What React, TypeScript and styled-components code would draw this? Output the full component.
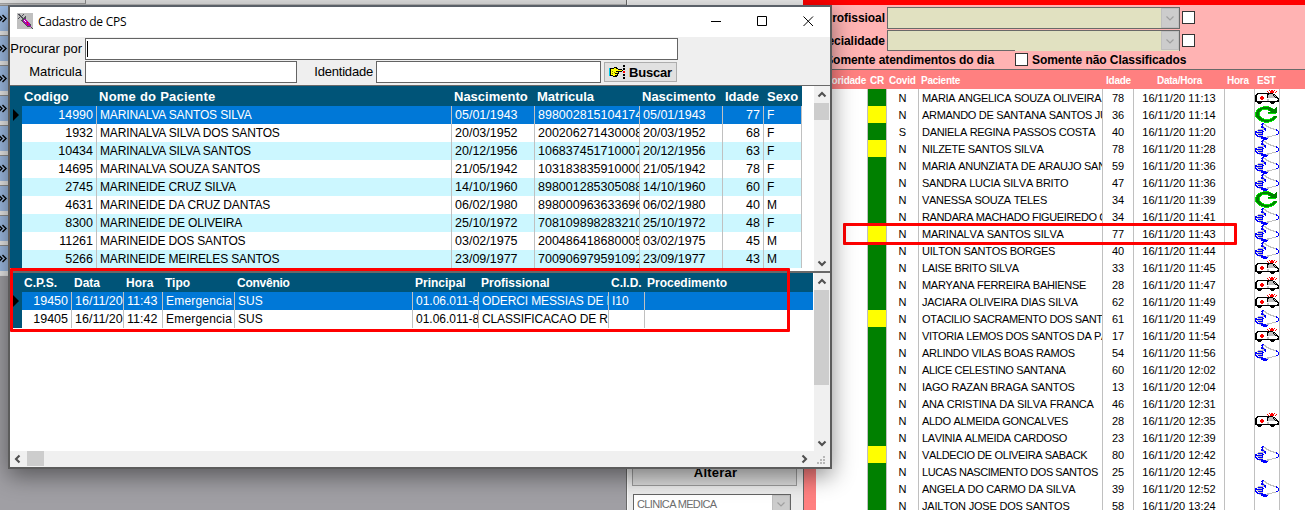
import React from 'react';
import styled, { createGlobalStyle } from 'styled-components';

const GlobalStyle = createGlobalStyle`
  * { box-sizing: border-box; }
  body { margin: 0; overflow: hidden; font-family: "Liberation Sans", Arial, sans-serif; }
`;

/* ---------- pixel icons ---------- */

const INK: Record<string, string> = {
  k: '#000', w: '#fff', g: '#c0c0c0', r: '#f00', b: '#00f', n: '#008000', l: '#00e800', y: '#ff0',
  m: '#b000b0', d: '#505058', c: '#00c8e8', o: '#808000',
};

const AMBULANCE = [
  '..............r.rr.r....',
  '............r..rrrr..r..',
  '.............r.rrrr.r...',
  '..kkkkkkkkkkkkkkkk......',
  '.kkwwwwwwwwwkkggggkk....',
  'kkwwwwwwwwwwkgggggkgk...',
  'kkwwwwrrwwwwkggggggkgk..',
  'kkwwwrrrrwwwkgggggggkkk.',
  'kkwwwrrrrwwwwwwwwwwwwwkk',
  'kkwwwwrrwwwwggwwwwwwwwwk',
  'kkwwwwwwwwwwggwwwwwwwwkk',
  'kkkkkkkkkkkkkkkkkkkkkkkk',
  '..kkkkk........kkkkk....',
  '...kkk..........kkk.....',
];
const HAND = [
  '.......bb...............',
  '......bbggg.............',
  '.......b..gg............',
  '......bbg..ggg..........',
  '......bbbg...ggg........',
  '.......ggbb....gggg.....',
  '...ggggggbb.......gggb..',
  '..gbbbbb..b..........bb.',
  'bb.ggggbb..............b',
  'bbbbbbbb...............b',
  'b.gggggb...............b',
  'bb.bbbbb.............bb.',
  '.bb.gggg.........gggg...',
  '..bbbbbb....ggggg.......',
  '....ggbbbbbggg..........',
  '......bbbbbbb...........',
  '........bbbb............',
];
const REFRESH = [
  '........llllll..........',
  '.....llnnnnnnnnl.....n..',
  '...llnnnnnnnnnnnnl..nn..',
  '..lnnnnllllllnnnnnnnnn..',
  '.lnnnnl......lnnnnnnnn..',
  '.lnnnl.........lnnnnnn..',
  'lnnnl........nnnnnnnnn..',
  'lnnnl........llllllll...',
  'lnnnl...................',
  'lnnnl...................',
  'lnnnnl............lnnn..',
  '.lnnnnl..........lnnnl..',
  '..lnnnnll......llnnnl...',
  '...lnnnnnllllllnnnnl....',
  '....llnnnnnnnnnnnll.....',
  '......lllnnnnnlll.......',
  '.........lllll..........',
];
const POINTER = [
  '..............kk',
  '..............kk',
  '.....kkk........',
  'ckkkkyykk.....kk',
  'ckyyyyyyykkkk.kk',
  'ckyyyyyyyyyyyk..',
  'ckyoyyykkkkkk.rr',
  'ckyyyoyyyk....rr',
  'ckyoyykkkk......',
  'ckyyyyyyk.....kk',
  'ckkkyykkk.....kk',
  '....kkkk........',
  '..............kk',
  '..............kk',
];
const SYRINGE = [
  'gggggggggggggggg',
  'gddgggdggggggggg',
  'ggddgdgggggggggg',
  'gggddgggdggggggg',
  'ggdgddgddggggggg',
  'gdgggddddggggggg',
  'gggggddmmggggggg',
  'ggggddmwmmgggggg',
  'gggggdmmwmmggggg',
  'ggggggdmmmrmgggg',
  'gggggggdmmmmmggg',
  'ggggggggdmrmmdgg',
  'gggggggggdmmmdgg',
  'ggggggggggdddmgg',
  'ggggggggggggggdg',
  'gggggggggggggggd',
];

const Pixels = styled.svg`
  display: block;
  flex: none;
`;

function PixelIcon({ map }: { map: string[] }) {
  const w = map[0].length;
  const paths: Record<string, string> = {};
  map.forEach((line, y) => {
    for (let x = 0; x < line.length; x++) {
      const ch = line[x];
      if (ch !== '.') paths[ch] = (paths[ch] || '') + `M${x} ${y}h1v1h-1z`;
    }
  });
  return (
    <Pixels width={w} height={map.length} viewBox={`0 0 ${w} ${map.length}`} shapeRendering="crispEdges">
      {Object.entries(paths).map(([ch, d]) => <path key={ch} d={d} fill={INK[ch]} />)}
    </Pixels>
  );
}

function Arrow({ dir, color = '#505050', thin }: { dir: 'up' | 'down' | 'left' | 'right'; color?: string; thin?: boolean }) {
  const d = { up: 'M1.5 6.5L5 3l3.5 3.5', down: 'M1.5 3.5L5 7l3.5-3.5', left: 'M6.5 1.5L3 5l3.5 3.5', right: 'M3.5 1.5L7 5L3.5 8.5' }[dir];
  return <svg width="10" height="10" viewBox="0 0 10 10"><path d={d} fill="none" stroke={color} strokeWidth={thin ? 1.2 : 2.1} /></svg>;
}

/* ---------- application behind the window ---------- */

const Desktop = styled.div`
  position: relative;
  display: flex;
  width: 1305px;
  height: 510px;
  overflow: hidden;
  background: #fff;
`;
const LeftArea = styled.div`
  width: 627px;
  display: flex;
  flex-direction: column;
  background: #a09fa4;
  border-right: 1px solid #696969;
`;
const TopStrip = styled.div`
  height: 5px;
  display: flex;
  background: #e1e1e1;
  border-bottom: 1px solid #b8b8b8;
`;
const TopTab = styled.div`
  width: 86px;
  height: 4px;
  border-right: 1px solid #8c8c8c;
  border-bottom: 1px solid #a0a0a0;
`;
const ToolStrip = styled.div`
  height: 271px;
  width: 9px;
  background: #e3e3e3;
  overflow: hidden;
`;
const ToolButton = styled.div`
  height: 30px;
  border-top: 1px solid #8d8d8d;
  border-bottom: 4px solid #e9e9e9;
  background: #9dbbe3;
  display: flex;
  align-items: center;
`;
const MiddleArea = styled.div`
  width: 176px;
  padding: 0 5px 0 4px;
  display: flex;
  flex-direction: column;
  justify-content: flex-end;
  background: #ececec;
  border-left: 1px solid #f8f8f8;
`;
const ChangeButton = styled.div`
  height: 40px;
  margin-right: 1px;
  display: flex;
  align-items: flex-end;
  justify-content: center;
  padding: 0 0 5px 2px;
  background: #dcdcdc;
  border: 1px solid #9c9c9c;
  font: bold 13px "Liberation Sans", sans-serif;
  letter-spacing: 0.2px;
`;
const ClinicSelect = styled.div`
  display: flex;
  width: 158px;
  height: 20px;
  margin: 8px 0 -4px 1px;
  border: 1px solid #646464;
  background: #fff;
  color: #6d6d6d;
  font-size: 11px;
  letter-spacing: -0.65px;
  line-height: 18px;
  padding-left: 3px;
`;
const DropButton = styled.div`
  width: 18px;
  margin-left: auto;
  display: flex;
  align-items: center;
  justify-content: center;
  background: #ccc;
  border: 1px solid #bfbfbf;
`;

const RightArea = styled.div`
  width: 502px;
  display: flex;
  flex-direction: column;
  background: #fff;
`;
const Filters = styled.div`
  height: 70px;
  flex: none;
  border-top: 5px solid #f00;
  border-bottom: 1px solid #696969;
  background: #ffb3b3;
  font: bold 12px "Liberation Sans", sans-serif;
`;
const FilterRow = styled.div<{ $h: number; $top?: number }>`
  display: flex;
  height: ${p => p.$h}px;
  padding-top: ${p => p.$top || 0}px;
`;
const FilterLabel = styled.div`
  width: 84px;
  padding-right: 2px;
  text-align: right;
  line-height: 22px;
  letter-spacing: -0.05px;
`;
const FilterSelect = styled.div<{ $h: number; $cut?: boolean }>`
  display: flex;
  width: 293px;
  height: ${p => p.$h}px;
  border: 1px solid #696969;
  border-bottom-width: ${p => (p.$cut ? 0 : 1)}px;
  padding-bottom: ${p => (p.$cut ? 1 : 0)}px;
  background: linear-gradient(#696969, #696969) left bottom / ${p => (p.$cut ? '127px 1px' : '0 0')} no-repeat #e1e1c1;
`;
const Check = styled.div`
  width: 13px;
  height: 13px;
  border: 1px solid #333;
  background: #fff;
  flex: none;
`;
const ComboCheck = styled(Check)`
  margin: 4px 0 0 2px;
`;
const OnlyRow = styled.div`
  display: flex;
  align-items: center;
  height: 19px;
  margin-top: -1px;
  letter-spacing: -0.07px;
`;
const OnlyToday = styled.span`
  width: 212px;
  padding-right: 21px;
  text-align: right;
  white-space: nowrap;
`;
const OnlyUnrated = styled.span`
  padding-left: 4px;
  white-space: nowrap;
`;
const QueueLine = styled.div`
  display: grid;
  grid-template-columns: 13px 52px 19px 32px 184px 31px 91px 30px 25px 25px;
  height: 17px;
  flex: none;
  font-size: 11px;
  line-height: 18px;
  white-space: nowrap;
  font-kerning: none;
`;
const QueueHead = styled(QueueLine)`
  height: 19px;
  background: #ff8080;
  color: #fff;
  font-weight: bold;
  font-size: 10px;
  line-height: 21px;
  letter-spacing: -0.25px;
`;
const QueueTitle = styled.div<{ $align?: string; $pad?: number }>`
  padding: 0 2px;
  padding-left: ${p => p.$pad ?? 2}px;
  text-align: ${p => p.$align || 'left'};
`;
const QueueCell = styled.div<{ $align?: string; $bg?: string; $ls?: number; $pad?: number }>`
  border-right: 1px solid #c0c0c0;
  overflow: hidden;
  text-align: ${p => p.$align || 'left'};
  background: ${p => p.$bg || 'transparent'};
  letter-spacing: ${p => p.$ls || 0}px;
  padding-left: ${p => p.$pad || 0}px;
`;
const QueueGutter = styled.div`
  background: #ff8080;
  border-left: 1px solid #696969;
`;
const StatusSlot = styled.div<{ $down: boolean }>`
  padding-top: ${p => (p.$down ? 1 : 0)}px;
`;

/* ---------- window ---------- */

const Window = styled.div`
  position: absolute;
  left: 8px;
  top: 5px;
  width: 824px;
  height: 464px;
  display: flex;
  flex-direction: column;
  background: #fff;
  border: 2px solid #5c5c5c;
  border-top-color: #5a6068;
  box-shadow: 0 7px 22px rgba(0, 0, 0, 0.45);
`;
const TitleBar = styled.div`
  height: 30px;
  flex: none;
  display: flex;
  align-items: center;
  padding: 0 16px 2px 7px;
  font: 12px "Open Sans", "Noto Sans", sans-serif;
  letter-spacing: -0.25px;
  svg + span { margin-left: 5px; }
`;
const WindowButtons = styled.div`
  display: flex;
  gap: 35px;
  margin-left: auto;
`;
const SearchArea = styled.div`
  height: 49px;
  flex: none;
  background: #efefef;
  border-bottom: 1px solid #696969;
  padding-top: 1px;
  font-size: 13px;
`;
const SearchRow = styled.div`
  display: flex;
  align-items: center;
  height: 22px;
  margin-bottom: 1px;
`;
const Label = styled.div<{ $w: number; $ls?: number }>`
  width: ${p => p.$w}px;
  text-align: right;
  padding-right: 3px;
  padding-bottom: 2px;
  white-space: nowrap;
  letter-spacing: ${p => p.$ls || 0}px;
`;
const Field = styled.div<{ $w: number }>`
  width: ${p => p.$w}px;
  height: 22px;
  background: #fff;
  border: 1px solid #646464;
  padding: 2px 1px;
`;
const Caret = styled.div`
  width: 1px;
  height: 16px;
  background: #000;
`;
const SearchButton = styled.div`
  width: 73px;
  height: 20px;
  margin-left: 3px;
  padding-left: 4px;
  display: flex;
  align-items: center;
  gap: 4px;
  background: #e1e1e1;
  border: 1px solid #adadad;
  font: bold 13px "Liberation Sans", sans-serif;
  letter-spacing: -0.2px;
`;
const Pane = styled.div<{ $h: number; $line?: boolean }>`
  display: flex;
  height: ${p => p.$h}px;
  flex: none;
  border-top: ${p => (p.$line ? 2 : 0)}px solid #696969;
`;
const Table = styled.div`
  width: 804px;
  font-size: 12px;
`;
const Line = styled.div<{ $cols: string; $w: number; $h: number; $bg: string; $fg?: string }>`
  display: grid;
  grid-template-columns: ${p => p.$cols};
  width: ${p => p.$w}px;
  height: ${p => p.$h}px;
  line-height: ${p => p.$h + 1}px;
  background: ${p => p.$bg};
  color: ${p => p.$fg || '#000'};
  white-space: nowrap;
`;
const Margin = styled.div`
  background: #005478;
  display: flex;
  align-items: center;
  padding-left: 3px;
`;
const RowMark = styled.div`
  border: 6px solid transparent;
  border-left-color: #000;
  border-right: 0;
`;
const Cell = styled.div<{ $right?: boolean; $ls?: number; $size?: number; $last?: boolean }>`
  overflow: hidden;
  padding: 0 3px;
  border-right: ${p => (p.$last ? 0 : 1)}px solid #c0c0c0;
  text-align: ${p => (p.$right ? 'right' : 'left')};
  letter-spacing: ${p => p.$ls || 0}px;
  font-size: ${p => p.$size || 12}px;
`;
const HeadCell = styled.div<{ $size: number; $ls?: number; $pad?: number }>`
  padding-left: ${p => p.$pad ?? 2}px;
  font-weight: bold;
  font-size: ${p => p.$size}px;
  letter-spacing: ${p => p.$ls || 0}px;
`;
const VScroll = styled.div`
  width: 16px;
  background: #f0f0f0;
  display: flex;
  flex-direction: column;
  align-items: center;
`;
const ScrollEnd = styled.div`
  width: 16px;
  height: 17px;
  display: flex;
  align-items: center;
  justify-content: center;
  flex: none;
`;
const Thumb = styled.div<{ $h: number }>`
  width: 15px;
  height: ${p => p.$h}px;
  margin-bottom: auto;
  align-self: flex-start;
  background: #cdcdcd;
`;
const HScroll = styled.div`
  display: flex;
  align-items: center;
  height: 16px;
  background: #f0f0f0;
`;
const HThumb = styled.div`
  width: 17px;
  height: 15px;
  margin: 0 auto 0 1px;
  align-self: flex-start;
  background: #cdcdcd;
`;
const Mark = styled.div<{ $x: number; $y: number; $w: number; $h: number }>`
  position: absolute;
  left: ${p => p.$x}px;
  top: ${p => p.$y}px;
  width: ${p => p.$w}px;
  height: ${p => p.$h}px;
  border: 3px solid #f00;
  border-radius: 1px;
`;

/* ---------- data ---------- */

const patients = [
  ['14990', 'MARINALVA SANTOS SILVA', '05/01/1943', '898002815104174', '77', 'F'],
  ['1932', 'MARINALVA SILVA DOS SANTOS', '20/03/1952', '200206271430008', '68', 'F'],
  ['10434', 'MARINALVA SILVA SANTOS', '20/12/1956', '106837451710007', '63', 'F'],
  ['14695', 'MARINALVA SOUZA SANTOS', '21/05/1942', '103183835910000', '78', 'F'],
  ['2745', 'MARINEIDE CRUZ SILVA', '14/10/1960', '898001285305088', '60', 'F'],
  ['4631', 'MARINEIDE DA CRUZ DANTAS', '06/02/1980', '898000963633696', '40', 'M'],
  ['8300', 'MARINEIDE DE OLIVEIRA', '25/10/1972', '708109898283210', '48', 'F'],
  ['11261', 'MARINEIDE DOS SANTOS', '03/02/1975', '200486418680005', '45', 'M'],
  ['5266', 'MARINEIDE MEIRELES SANTOS', '23/09/1977', '700906979591092', '43', 'M'],
];
const visits = [
  ['19450', '16/11/20', '11:43', 'Emergencia', 'SUS', '01.06.011-8', 'ODERCI MESSIAS DE M', 'I10', ''],
  ['19405', '16/11/20', '11:42', 'Emergencia', 'SUS', '01.06.011-8', 'CLASSIFICACAO DE RI', '', ''],
];
const queue: [string, string, string, string, string, string, number?][] = [
  ['g', 'N', 'MARIA ANGELICA SOUZA OLIVEIRA', '78', '11:13', 'a'],
  ['y', 'N', 'ARMANDO DE SANTANA SANTOS JU', '36', '11:14', 'r'],
  ['g', 'S', 'DANIELA REGINA PASSOS COSTA', '40', '11:20', 'h'],
  ['y', 'N', 'NILZETE SANTOS SILVA', '78', '11:28', 'h'],
  ['g', 'N', 'MARIA ANUNZIATA DE ARAUJO SAN', '59', '11:36', 'h', -0.28],
  ['g', 'N', 'SANDRA LUCIA SILVA BRITO', '47', '11:36', 'h', -0.25],
  ['g', 'N', 'VANESSA SOUZA TELES', '34', '11:39', 'r'],
  ['g', 'N', 'RANDARA MACHADO FIGUEIREDO C', '34', '11:41', 'h', -0.38],
  ['y', 'N', 'MARINALVA SANTOS SILVA', '77', '11:43', 'h', -0.2],
  ['g', 'N', 'UILTON SANTOS BORGES', '40', '11:44', 'h', -0.28],
  ['g', 'N', 'LAISE BRITO SILVA', '33', '11:45', 'a'],
  ['g', 'N', 'MARYANA FERREIRA BAHIENSE', '28', '11:47', 'a'],
  ['g', 'N', 'JACIARA OLIVEIRA DIAS SILVA', '62', '11:49', 'a', -0.27],
  ['y', 'N', 'OTACILIO SACRAMENTO DOS SANTO', '61', '11:49', 'h', -0.38],
  ['g', 'N', 'VITORIA LEMOS DOS SANTOS DA PA', '17', '11:54', 'a', -0.36],
  ['g', 'N', 'ARLINDO VILAS BOAS RAMOS', '54', '11:56', 'h'],
  ['g', 'N', 'ALICE CELESTINO SANTANA', '60', '12:02', '', -0.38],
  ['g', 'N', 'IAGO RAZAN BRAGA SANTOS', '13', '12:04', '', -0.22],
  ['g', 'N', 'ANA CRISTINA DA SILVA FRANCA', '46', '12:31', '', -0.22],
  ['g', 'N', 'ALDO ALMEIDA GONCALVES', '28', '12:35', 'a'],
  ['g', 'N', 'LAVINIA ALMEIDA CARDOSO', '23', '12:39', ''],
  ['y', 'N', 'VALDECIO DE OLIVEIRA SABACK', '80', '12:42', 'h', -0.38],
  ['g', 'N', 'LUCAS NASCIMENTO DOS SANTOS', '25', '12:45', '', -0.46],
  ['g', 'N', 'ANGELA DO CARMO DA SILVA', '39', '12:52', 'h'],
  ['g', 'N', 'JAILTON JOSE DOS SANTOS', '58', '13:24', '', -0.2],
];
const STATUS: Record<string, string[]> = { a: AMBULANCE, r: REFRESH, h: HAND };
const PATIENT_COLS = '12px 75px 355px 83px 105px 83px 41px 38px';
const VISIT_COLS = '12px 50px 52px 39px 72px 178px 66px 130px 36px 168px';

function Queue() {
  return (
    <>
      <QueueHead>
        <div />
        <QueueTitle $align="right">Prioridade</QueueTitle>
        <QueueTitle>CR</QueueTitle>
        <QueueTitle>Covid</QueueTitle>
        <QueueTitle>Paciente</QueueTitle>
        <QueueTitle $pad={3}>Idade</QueueTitle>
        <QueueTitle $align="center">Data/Hora</QueueTitle>
        <QueueTitle>Hora</QueueTitle>
        <QueueTitle>EST</QueueTitle>
      </QueueHead>
      {queue.map(([color, covid, name, age, hour, status, ls = -0.31], i) => (
        <QueueLine key={i}>
          <QueueGutter />
          <QueueCell />
          <QueueCell $bg={color === 'g' ? '#008000' : '#ff0'} />
          <QueueCell $align="center">{covid}</QueueCell>
          <QueueCell $pad={3} $ls={ls}>{name}</QueueCell>
          <QueueCell $align="center">{age}</QueueCell>
          <QueueCell $align="center">16/11/20 {hour}</QueueCell>
          <QueueCell />
          <QueueCell>{status && <StatusSlot $down={status === 'a'}><PixelIcon map={STATUS[status]} /></StatusSlot>}</QueueCell>
        </QueueLine>
      ))}
    </>
  );
}

export default function App() {
  return (
    <Desktop>
      <GlobalStyle />
      <LeftArea>
        <TopStrip><TopTab /></TopStrip>
        <ToolStrip>
          {Array.from({ length: 9 }, (_, i) => (
            <ToolButton key={i}>
              <svg width="8" height="9" viewBox="0 0 8 9"><path d="M-1.5 1L2 4.5L-1.5 8M2.5 1L6 4.5L2.5 8" fill="none" stroke="#000" strokeWidth="1.4" /></svg>
            </ToolButton>
          ))}
        </ToolStrip>
      </LeftArea>
      <MiddleArea>
        <ChangeButton>Alterar</ChangeButton>
        <ClinicSelect>CLINICA MEDICA<DropButton><Arrow dir="down" color="#a0a0a0" thin /></DropButton></ClinicSelect>
      </MiddleArea>
      <RightArea>
        <Filters>
          <FilterRow $h={25} $top={2}>
            <FilterLabel>Profissioal</FilterLabel>
            <FilterSelect $h={22}><DropButton><Arrow dir="down" color="#a0a0a0" thin /></DropButton></FilterSelect>
            <ComboCheck />
          </FilterRow>
          <FilterRow $h={21}>
            <FilterLabel>Especialidade</FilterLabel>
            <FilterSelect $h={21} $cut><DropButton><Arrow dir="down" color="#a0a0a0" thin /></DropButton></FilterSelect>
            <ComboCheck />
          </FilterRow>
          <OnlyRow>
            <OnlyToday>Somente atendimentos do dia</OnlyToday>
            <Check />
            <OnlyUnrated>Somente não Classificados</OnlyUnrated>
          </OnlyRow>
        </Filters>
        <Queue />
      </RightArea>

      <Mark $x={843} $y={223} $w={394} $h={22} />

      <Window>
        <TitleBar>
          <PixelIcon map={SYRINGE} />
          <span>Cadastro de CPS</span>
          <WindowButtons>
            <svg width="11" height="11" viewBox="0 0 11 11"><path d="M0 5.5h10" stroke="#000" /></svg>
            <svg width="11" height="11" viewBox="0 0 11 11"><path d="M.5.5h9v9h-9z" fill="none" stroke="#000" /></svg>
            <svg width="11" height="11" viewBox="0 0 11 11"><path d="M.5.5l9.5 9.5M10 .5L.5 10" stroke="#000" /></svg>
          </WindowButtons>
        </TitleBar>
        <SearchArea>
          <SearchRow>
            <Label $w={75} $ls={-0.05}>Procurar por</Label>
            <Field $w={593}><Caret /></Field>
          </SearchRow>
          <SearchRow>
            <Label $w={75}>Matricula</Label>
            <Field $w={212} />
            <Label $w={79} $ls={-0.2}>Identidade</Label>
            <Field $w={225} />
            <SearchButton><PixelIcon map={POINTER} />Buscar</SearchButton>
          </SearchRow>
        </SearchArea>
        <Pane $h={185}>
          <Table>
            <Line $cols={PATIENT_COLS} $w={792} $h={20} $bg="#005478" $fg="#fff">
              <div />
              <HeadCell $size={13}>Codigo</HeadCell>
              <HeadCell $size={13} $ls={0.24}>Nome do Paciente</HeadCell>
              <HeadCell $size={13}>Nascimento</HeadCell>
              <HeadCell $size={13}>Matricula</HeadCell>
              <HeadCell $size={13}>Nascimento</HeadCell>
              <HeadCell $size={13}>Idade</HeadCell>
              <HeadCell $size={13} $pad={3}>Sexo</HeadCell>
            </Line>
            {patients.map((p, i) => (
              <Line key={p[0]} $cols={PATIENT_COLS} $w={792} $h={18} $bg={i === 0 ? '#0078d7' : i % 2 ? '#fff' : '#ccf7ff'} $fg={i === 0 ? '#fff' : '#000'}>
                <Margin>{i === 0 && <RowMark />}</Margin>
                <Cell $right $size={12.5}>{p[0]}</Cell>
                <Cell $ls={-0.15}>{p[1]}</Cell>
                <Cell $size={12.5}>{p[2]}</Cell>
                <Cell $size={12.5}>{p[3]}</Cell>
                <Cell $size={12.5}>{p[2]}</Cell>
                <Cell $right $size={12.5}>{p[4]}</Cell>
                <Cell>{p[5]}</Cell>
              </Line>
            ))}
          </Table>
          <VScroll>
            <ScrollEnd><Arrow dir="up" /></ScrollEnd>
            <Thumb $h={17} />
            <ScrollEnd><Arrow dir="down" /></ScrollEnd>
          </VScroll>
        </Pane>
        <Pane $h={180} $line>
          <Table>
            <Line $cols={VISIT_COLS} $w={803} $h={19} $bg="#005478" $fg="#fff">
              <div />
              {['C.P.S.', 'Data', 'Hora', 'Tipo', 'Convênio', 'Principal', 'Profissional', 'C.I.D.', 'Procedimento'].map(h => (
                <HeadCell key={h} $size={12} $ls={h === 'Convênio' ? -0.25 : 0}>{h}</HeadCell>
              ))}
            </Line>
            {visits.map((v, i) => (
              <Line key={v[0]} $cols={VISIT_COLS} $w={803} $h={18} $bg={i ? '#fff' : '#0078d7'} $fg={i ? '#000' : '#fff'}>
                <Margin>{i === 0 && <RowMark />}</Margin>
                {v.map((t, c) => (
                  <Cell key={c} $right={c === 0} $ls={c === 6 ? -0.12 : c === 3 ? 0.2 : 0} $size={c < 3 ? 12.5 : 12} $last={c === 8}>{t}</Cell>
                ))}
              </Line>
            ))}
          </Table>
          <VScroll>
            <ScrollEnd><Arrow dir="up" /></ScrollEnd>
            <Thumb $h={95} />
            <ScrollEnd><Arrow dir="down" /></ScrollEnd>
          </VScroll>
        </Pane>
        <HScroll>
          <ScrollEnd><Arrow dir="left" /></ScrollEnd>
          <HThumb />
          <ScrollEnd><Arrow dir="right" /></ScrollEnd>
          <svg width="18" height="16" viewBox="0 0 18 16" fill="#b8b8b8">
            <path d="M11 5h2v2h-2zM8 8h2v2h-2zM11 8h2v2h-2zM5 11h2v2h-2zM8 11h2v2h-2zM11 11h2v2h-2z" />
          </svg>
        </HScroll>
      </Window>

      <Mark $x={10} $y={268} $w={780} $h={64} />
    </Desktop>
  );
}
